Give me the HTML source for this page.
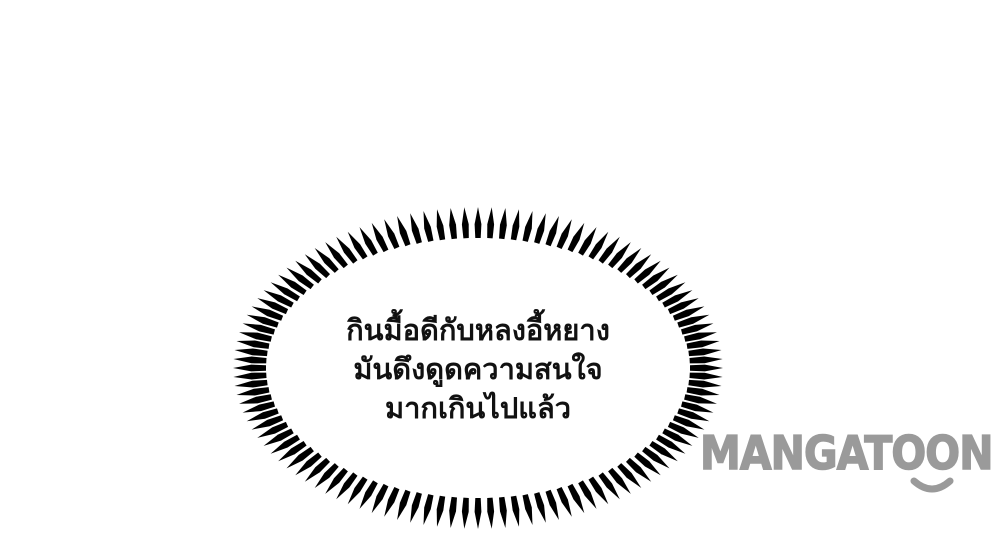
<!DOCTYPE html>
<html><head><meta charset="utf-8"><style>
html,body{margin:0;padding:0;background:#fff;width:1000px;height:546px;overflow:hidden;position:relative;font-family:"Liberation Sans",sans-serif}
.t{position:absolute;left:228px;width:500px;text-align:center;font-weight:bold;font-size:29px;color:#111;line-height:39px;top:312px}
.logo{position:absolute;left:700px;top:426px;font-size:46px;font-weight:900;color:#9a9a9a;letter-spacing:-1px;font-family:"DejaVu Sans","Liberation Sans",sans-serif;transform:scaleX(0.89);transform-origin:left;-webkit-text-stroke:1.5px #9a9a9a;white-space:nowrap}
</style></head><body>
<svg id="s" width="1000" height="546" style="position:absolute;left:0;top:0"></svg>
<div class="t">กินมื้อดีกับหลงอี้หยาง<br>มันดึงดูดความสนใจ<br>มากเกินไปแล้ว</div>
<div class="logo">MANGATOON</div>
<svg width="1000" height="546" style="position:absolute;left:0;top:0"><path d="M914 481 Q932 497 950 481" stroke="#9a9a9a" stroke-width="7" fill="none" stroke-linecap="round"/></svg>
<script>
var s=document.getElementById('s'),cx=478,cy=368,h='';
var N=112;
for(var i=0;i<N;i++){var t=i/N*2*Math.PI;
var ox=cx+245*Math.cos(t),oy=cy+161*Math.sin(t),ix=cx+212*Math.cos(t),iy=cy+130*Math.sin(t);
var dx=ox-ix,dy=oy-iy,L=Math.hypot(dx,dy),nx=-dy/L,ny=dx/L,w=3.4;
h+='<polygon fill="#000" points="'+[ox,oy,(ix+dx*0.45)+nx*w,(iy+dy*0.45)+ny*w,ix+nx*w*0.8,iy+ny*w*0.8,ix-nx*w*0.8,iy-ny*w*0.8,(ix+dx*0.45)-nx*w,(iy+dy*0.45)-ny*w].map(function(v){return v.toFixed(1)}).join(' ')+'"/>';}
s.innerHTML=h;
</script>
</body></html>
